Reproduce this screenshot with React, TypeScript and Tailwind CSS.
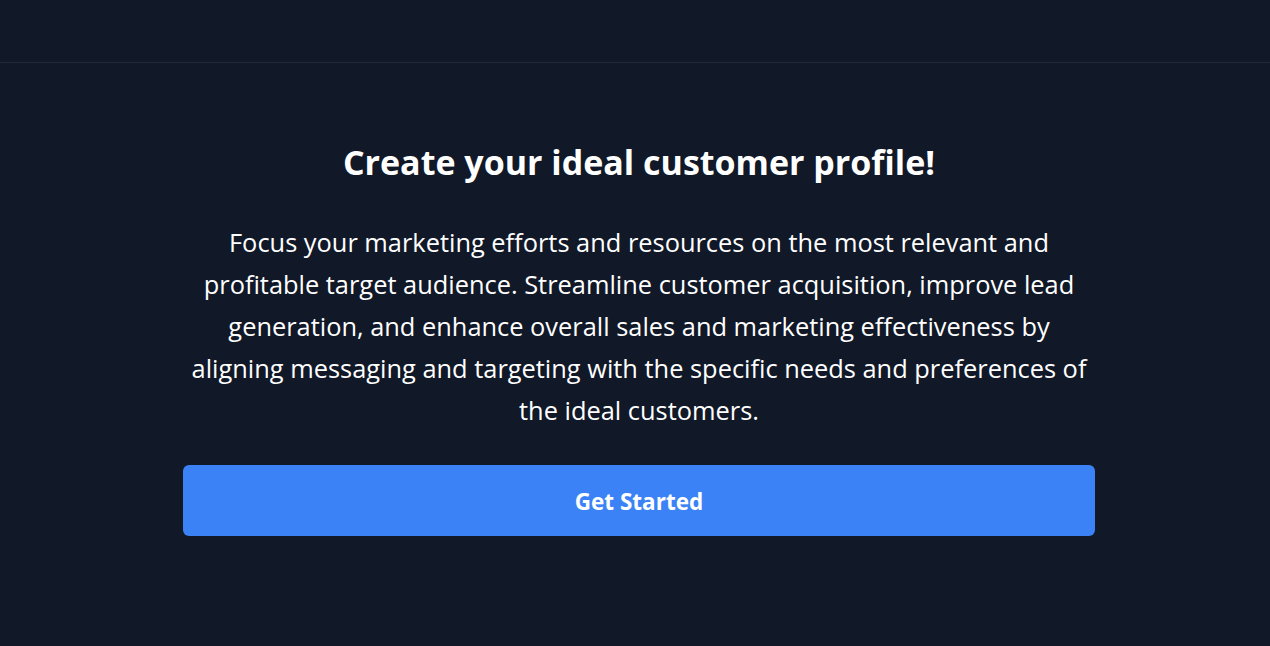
export default function App() {
  return (
    <div className="min-h-[646px] bg-[#111827] text-white font-['Open_Sans','Noto_Sans',sans-serif]">
      <header className="h-[63px] border-b border-[#1f2937]" />
      <main className="flex justify-center pl-[8px] pt-[79px]">
        <section className="w-[912px] flex flex-col items-center text-center">
          <h1 className="text-[34px] leading-[40px] font-bold">Create your ideal customer profile!</h1>
          <p className="mt-[39px] w-[905px] text-[25.4px] leading-[42px]">
            Focus your marketing efforts and resources on the most relevant and profitable target audience. Streamline
            customer acquisition, improve lead generation, and enhance overall sales and marketing effectiveness by
            aligning messaging and targeting with the specific needs and preferences of the ideal customers.
          </p>
          <button className="mt-[34px] w-full h-[71px] pt-[3px] rounded-md bg-[#3b82f6] text-[22.5px] font-bold">
            Get Started
          </button>
        </section>
      </main>
    </div>
  );
}
